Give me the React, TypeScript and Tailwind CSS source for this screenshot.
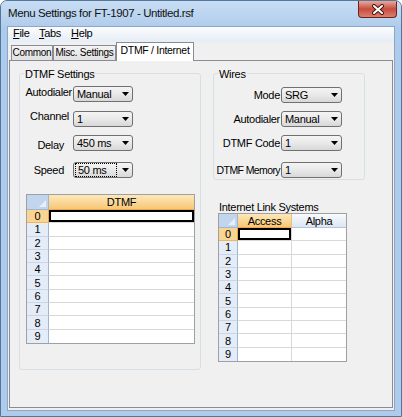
const ROWS = [0, 1, 2, 3, 4, 5, 6, 7, 8, 9];

function DownArrow() {
  return (
    <svg width="7" height="4" viewBox="0 0 7 4" className="shrink-0">
      <path d="M0 0h7L3.5 4z" fill="#000" />
    </svg>
  );
}

function Combo({ value, w, focus = false }: { value: string; w: string; focus?: boolean }) {
  return (
    <div
      className={`${w} flex h-[16px] shrink-0 items-center rounded-[3px] border border-[#707070] bg-gradient-to-b from-[#f4f4f4] via-[#e9e9e9] to-[#d8d8d8] pl-[1px] pr-[3px]`}
    >
      <div className="flex-1">
        <div
          className={`flex h-[14px] w-[42px] items-center pl-[2px] leading-[12px] ${
            focus ? "border border-dotted border-black pl-[1px]" : ""
          }`}
        >
          {value}
        </div>
      </div>
      <DownArrow />
    </div>
  );
}

type Col = { name: string; w: string };

function Grid({ w, headW, headH, cols }: { w: string; headW: string; headH: string; cols: Col[] }) {
  return (
    <div className={`${w} border border-[#a0a0a0] bg-white`}>
      <div className={`flex ${headH}`}>
        <div
          className={`${headW} flex shrink-0 items-end justify-end border-b border-r border-[#9eb6ce] bg-[#c2d5ee] p-[2px]`}
        >
          <svg width="7" height="7" viewBox="0 0 7 7">
            <path d="M7 0V7H0z" fill="#e8eff9" />
          </svg>
        </div>
        {cols.map((c, i) => (
          <div
            key={c.name}
            className={`${c.w} flex items-center justify-center border-b leading-[12px] ${
              i < cols.length - 1 ? "border-r" : ""
            } ${
              i === 0
                ? "border-b-[#f0a84a] border-r-[#f0c07a] bg-gradient-to-b from-[#fde8ba] to-[#f7c775]"
                : "border-[#b5c6dc] bg-gradient-to-b from-[#f8fafd] to-[#dde6f1]"
            }`}
          >
            {c.name}
          </div>
        ))}
      </div>
      {ROWS.map((r) => (
        <div key={r} className="flex h-[13.3px]">
          <div
            className={`${headW} flex shrink-0 items-center justify-center border-r leading-[12px] ${
              r < 9 ? "border-b" : ""
            } ${
              r === 0
                ? "border-b-[#efb560] border-r-[#e9a444] bg-[#f9d593]"
                : "border-b-[#c9d6e8] border-r-[#9eb6ce] bg-[#e4ecf7]"
            }`}
          >
            {r}
          </div>
          {cols.map((c, i) => (
            <div
              key={c.name}
              className={`${c.w} border-[#d8d8d8] ${r < 9 ? "border-b" : ""} ${
                i < cols.length - 1 ? "border-r" : ""
              }`}
            >
              {r === 0 && i === 0 && <div className="h-full border-2 border-black" />}
            </div>
          ))}
        </div>
      ))}
    </div>
  );
}

function Tab({ label, w, active = false }: { label: string; w: string; active?: boolean }) {
  if (active) {
    return (
      <div
        className={`${w} relative z-10 -mb-px flex h-[19px] justify-center border border-b-0 border-[#898c95] bg-white pt-[1px] text-[10.5px] leading-[13px]`}
      >
        {label}
      </div>
    );
  }
  return (
    <div
      className={`${w} flex h-[15px] justify-center border border-b-0 border-[#898c95] bg-gradient-to-b from-[#f4f4f4] to-[#e1e1e1] text-[10px] leading-[13px]`}
    >
      {label}
    </div>
  );
}

export default function App() {
  return (
    <div className="relative flex h-[417px] w-[402px] flex-col overflow-hidden whitespace-nowrap rounded-t-[7px] border border-[#54769b] bg-[#adcbec] font-['Liberation_Sans',Arial,sans-serif] text-[11px] tracking-[-0.3px] text-black">
      {/* title bar */}
      <div className="flex h-[25px] items-start bg-gradient-to-b from-[#c8ddf3] to-[#b1cdec] pl-[7px] pt-[5px] text-[11.5px] leading-[14px] tracking-[-0.4px] text-[#111]">
        Menu Settings for FT-1907 - Untitled.rsf
      </div>
      <div className="absolute right-[4px] top-0 flex h-[17px] w-[39px] items-center justify-center rounded-b-[4px] border border-t-0 border-[#6a241b] bg-gradient-to-b from-[#e6a99d] via-[#c74b3e] to-[#d9806e]">
        <svg width="14" height="11" viewBox="0 0 14 11">
          <path d="M3 2l8 7M11 2L3 9" stroke="#4a1510" strokeWidth="4" strokeLinecap="round" />
          <path d="M3 2l8 7M11 2L3 9" stroke="#fff" strokeWidth="2" strokeLinecap="round" />
        </svg>
      </div>

      {/* client */}
      <div className="mx-[6px] mb-[5px] flex flex-1 flex-col border border-[#8ea6c2] bg-[#f0f0f0]">
        <div className="flex h-[15px] bg-gradient-to-b from-[#fbfcfe] to-[#e6edf6] pl-[5px] leading-[13px]">
          <span className="w-[26px]">
            <span className="underline">F</span>ile
          </span>
          <span className="w-[32px]">
            <span className="underline">T</span>abs
          </span>
          <span>
            <span className="underline">H</span>elp
          </span>
        </div>

        <div className="flex h-[18px] items-end pl-[3px]">
          <Tab label="Common" w="w-[42px]" />
          <Tab label="Misc. Settings" w="w-[63px]" />
          <Tab label="DTMF / Internet" w="w-[78px]" active />
        </div>

        <div className="mx-px mb-[2px] flex flex-1 items-start border border-[#898c95] bg-[#f0f0f0]">
          {/* DTMF Settings */}
          <div className="relative ml-[9px] mt-[12px] flex h-[297px] w-[182px] shrink-0 flex-col rounded-[3px] border border-[#d5dfe5] pt-[12px]">
            <span className="absolute left-[4px] top-[-6px] bg-[#f0f0f0] px-px leading-[13px]">DTMF Settings</span>

            <div className="flex h-[16px] items-start">
              <div className="w-[53px] shrink-0 pr-px text-right leading-[13px]">Autodialer</div>
              <Combo value="Manual" w="w-[60px]" />
            </div>
            <div className="mt-[9px] flex h-[16px] items-start">
              <div className="-mt-px w-[53px] shrink-0 pr-[4px] text-right leading-[13px]">Channel</div>
              <Combo value="1" w="w-[60px]" />
            </div>
            <div className="mt-[8px] flex h-[16px] items-start">
              <div className="mt-[4px] w-[53px] shrink-0 pr-[9px] text-right leading-[13px]">Delay</div>
              <Combo value="450 ms" w="w-[60px]" />
            </div>
            <div className="mt-[11px] flex h-[16px] items-start">
              <div className="mt-[2px] w-[53px] shrink-0 pr-[9px] text-right leading-[13px]">Speed</div>
              <Combo value="50 ms" w="w-[60px]" focus />
            </div>

            <div className="ml-[6px] mt-[16px]">
              <Grid w="w-[169px]" headW="w-[22px]" headH="h-[15px]" cols={[{ name: "DTMF", w: "flex-1" }]} />
            </div>
          </div>

          {/* right column */}
          <div className="ml-[12px] mt-[12px] flex flex-col">
            <div className="relative flex h-[107px] w-[152px] flex-col rounded-[3px] border border-[#d5dfe5] pt-[13px]">
              <span className="absolute left-[4px] top-[-6px] bg-[#f0f0f0] px-px leading-[13px]">Wires</span>
              <div className="flex h-[16px] items-center">
                <div className="w-[67px] shrink-0 pr-px text-right leading-[13px]">Mode</div>
                <Combo value="SRG" w="w-[61px]" />
              </div>
              <div className="mt-[8px] flex h-[16px] items-center">
                <div className="w-[67px] shrink-0 pr-px text-right leading-[13px]">Autodialer</div>
                <Combo value="Manual" w="w-[61px]" />
              </div>
              <div className="mt-[8px] flex h-[16px] items-center">
                <div className="w-[67px] shrink-0 pr-px text-right leading-[13px]">DTMF Code</div>
                <Combo value="1" w="w-[61px]" />
              </div>
              <div className="mt-[11px] flex h-[16px] items-center">
                <div className="w-[67px] shrink-0 pr-px text-right text-[10.5px] leading-[13px] tracking-[-0.6px]">
                  DTMF Memory
                </div>
                <Combo value="1" w="w-[61px]" />
              </div>
            </div>

            <div className="ml-[6px] mt-[21px] leading-[12px]">Internet Link Systems</div>
            <div className="ml-[5px]">
              <Grid
                w="w-[129px]"
                headW="w-[19px]"
                headH="h-[14px]"
                cols={[
                  { name: "Access", w: "w-[54px]" },
                  { name: "Alpha", w: "flex-1" },
                ]}
              />
            </div>
          </div>
        </div>
      </div>
    </div>
  );
}
